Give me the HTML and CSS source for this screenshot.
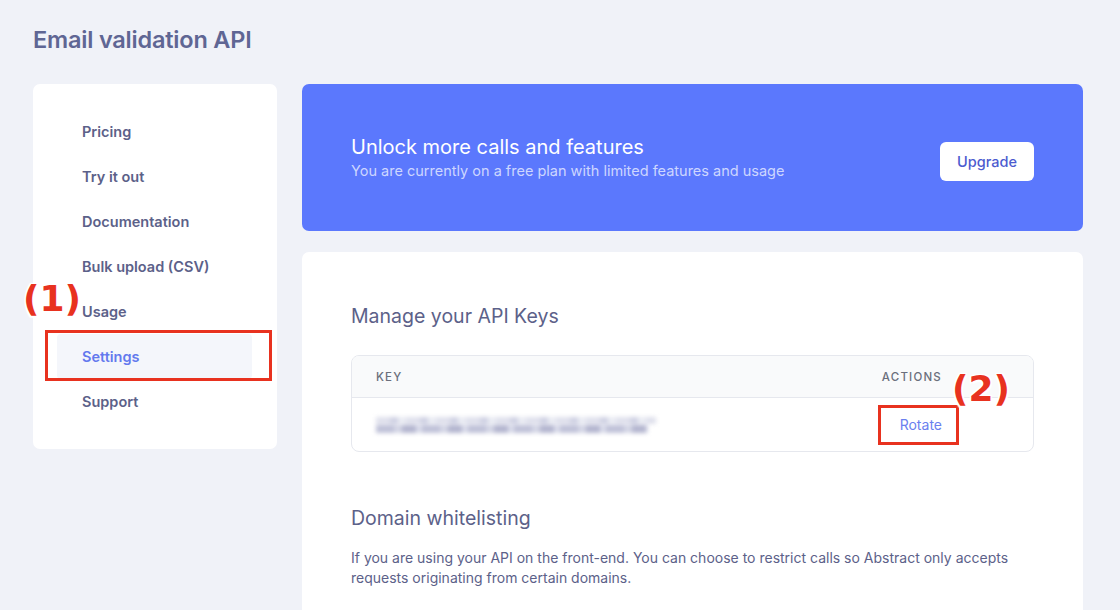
FILE: index.html
```html
<!DOCTYPE html>
<html lang="en">
<head>
<meta charset="utf-8">
<title>Email validation API</title>
<link rel="stylesheet" href="styles.css">
</head>
<body>
<div class="page">
  <h1 class="title">Email validation API</h1>
  <div class="layout">
    <aside class="sidebar">
      <nav class="nav">
        <a class="nav-item">Pricing</a>
        <a class="nav-item">Try it out</a>
        <a class="nav-item">Documentation</a>
        <a class="nav-item">Bulk upload (CSV)</a>
        <a class="nav-item">Usage</a>
        <a class="nav-item active">Settings</a>
        <a class="nav-item">Support</a>
      </nav>
    </aside>
    <main class="main">
      <section class="banner">
        <div class="banner-text">
          <div class="banner-title">Unlock more calls and features</div>
          <div class="banner-sub">You are currently on a free plan with limited features and usage</div>
        </div>
        <button class="upgrade">Upgrade</button>
      </section>
      <section class="card">
        <h2 class="section-title">Manage your API Keys</h2>
        <div class="table">
          <div class="row head">
            <span>KEY</span>
            <span>ACTIONS</span>
          </div>
          <div class="row body">
            <span class="key-blur"><span class="blur-a"></span><span class="blur-b"></span></span>
            <a class="rotate">Rotate</a>
          </div>
        </div>
        <h2 class="section-title second">Domain whitelisting</h2>
        <p class="desc">If you are using your API on the front-end. You can choose to restrict calls so Abstract only accepts requests originating from certain domains.</p>
      </section>
    </main>
  </div>
  <div class="mark box-1"></div>
  <div class="mark box-2"></div>
  <div class="label label-1">(1)</div>
  <div class="label label-2">(2)</div>
</div>
</body>
</html>
```

FILE: styles.css
```css
* { box-sizing: border-box; }
html, body {
  margin: 0;
  padding: 0;
  background: #f0f2f8;
  font-family: Inter, "Noto Sans", "Liberation Sans", sans-serif;
  color: #5c6189;
}
.page {
  position: relative;
  width: 1120px;
  height: 610px;
  overflow: hidden;
  padding: 0 37px 0 33px;
}
.title {
  margin: 0;
  padding-top: 25px;
  height: 84px;
  font-size: 23.5px;
  font-weight: 600;
  line-height: 30px;
  color: #5f6694;
  letter-spacing: -0.2px;
}
.layout {
  display: grid;
  grid-template-columns: 244px 781px;
  column-gap: 25px;
  align-items: start;
}
.sidebar {
  background: #fff;
  border-radius: 7px;
  padding: 25px 25px 25px 24px;
}
.nav { display: flex; flex-direction: column; }
.nav-item {
  display: block;
  height: 45px;
  line-height: 45px;
  padding-left: 25px;
  font-size: 14.5px;
  font-weight: 600;
  color: #5c6189;
  border-radius: 4px;
}
.nav-item.active {
  background: #f4f6fb;
  color: #6379ee;
}
.main { display: flex; flex-direction: column; gap: 21px; }
.banner {
  height: 147px;
  background: #5b78fd;
  border-radius: 7px;
  padding: 0 49px;
  display: flex;
  align-items: center;
  justify-content: space-between;
}
.banner-title {
  font-size: 20px;
  line-height: 26px;
  color: #fff;
  font-weight: 400;
}
.banner-sub {
  font-size: 14.5px;
  line-height: 20px;
  color: #cdd6ff;
  margin-top: 1px;
}
.upgrade {
  width: 94px;
  height: 39px;
  border: 0;
  border-radius: 6px;
  background: #fff;
  color: #4c5bcf;
  font-family: inherit;
  font-size: 14.5px;
  font-weight: 500;
  margin-top: 8px;
}
.card {
  background: #fff;
  border-radius: 7px 7px 0 0;
  padding: 50px 49px 40px;
  min-height: 400px;
}
.section-title {
  margin: 0;
  font-size: 19.5px;
  line-height: 28px;
  font-weight: 400;
  color: #5c6189;
}
.section-title.second { margin-top: 52px; }
.table {
  margin-top: 25px;
  border: 1px solid #e6e8ee;
  border-radius: 8px;
  overflow: hidden;
}
.row {
  display: flex;
  align-items: center;
  justify-content: space-between;
  padding: 0 91px 0 24px;
}
.row.head {
  height: 42px;
  background: #f9fafb;
  border-bottom: 1px solid #e6e8ee;
  font-size: 11.5px;
  letter-spacing: 1.2px;
  color: #6b6f7c;
  font-weight: 500;
}
.row.body { height: 53px; }
.key-blur {
  display: flex;
  flex-direction: column;
  gap: 1px;
  width: 286px;
  filter: blur(2px);
}
.blur-a {
  height: 7px;
  width: 280px;
  background: repeating-linear-gradient(90deg, #dfe0ec 0 14px, #cfd1e3 14px 22px, #e9ebf3 22px 30px);
}
.blur-b {
  height: 8px;
  width: 272px;
  background: repeating-linear-gradient(90deg, #bfc1d8 0 18px, #d3d5e5 18px 26px, #b3b5cf 26px 40px, #d9dbea 40px 46px);
}
.rotate {
  font-size: 14px;
  color: #6a80ef;
}
.desc {
  margin: 16px 0 0;
  font-size: 14px;
  line-height: 20px;
  color: #5c6189;
  max-width: 670px;
}
.mark {
  position: absolute;
  border: 3px solid #e8321f;
}
.box-1 { left: 45px; top: 330px; width: 227px; height: 51px; }
.box-2 { left: 878px; top: 405px; width: 81px; height: 40px; }
.label {
  position: absolute;
  font-family: "DejaVu Sans", sans-serif;
  font-weight: 700;
  font-size: 36px;
  line-height: 42px;
  color: #e8321f;
  text-shadow: 0 0 2px #fff, 0 0 2px #fff, 1.5px 1.5px 1px #fff, -1.5px -1.5px 1px #fff, 1.5px -1.5px 1px #fff, -1.5px 1.5px 1px #fff;
}
.label-1 { left: 23px; top: 278px; }
.label-2 { left: 952px; top: 368px; }
```
